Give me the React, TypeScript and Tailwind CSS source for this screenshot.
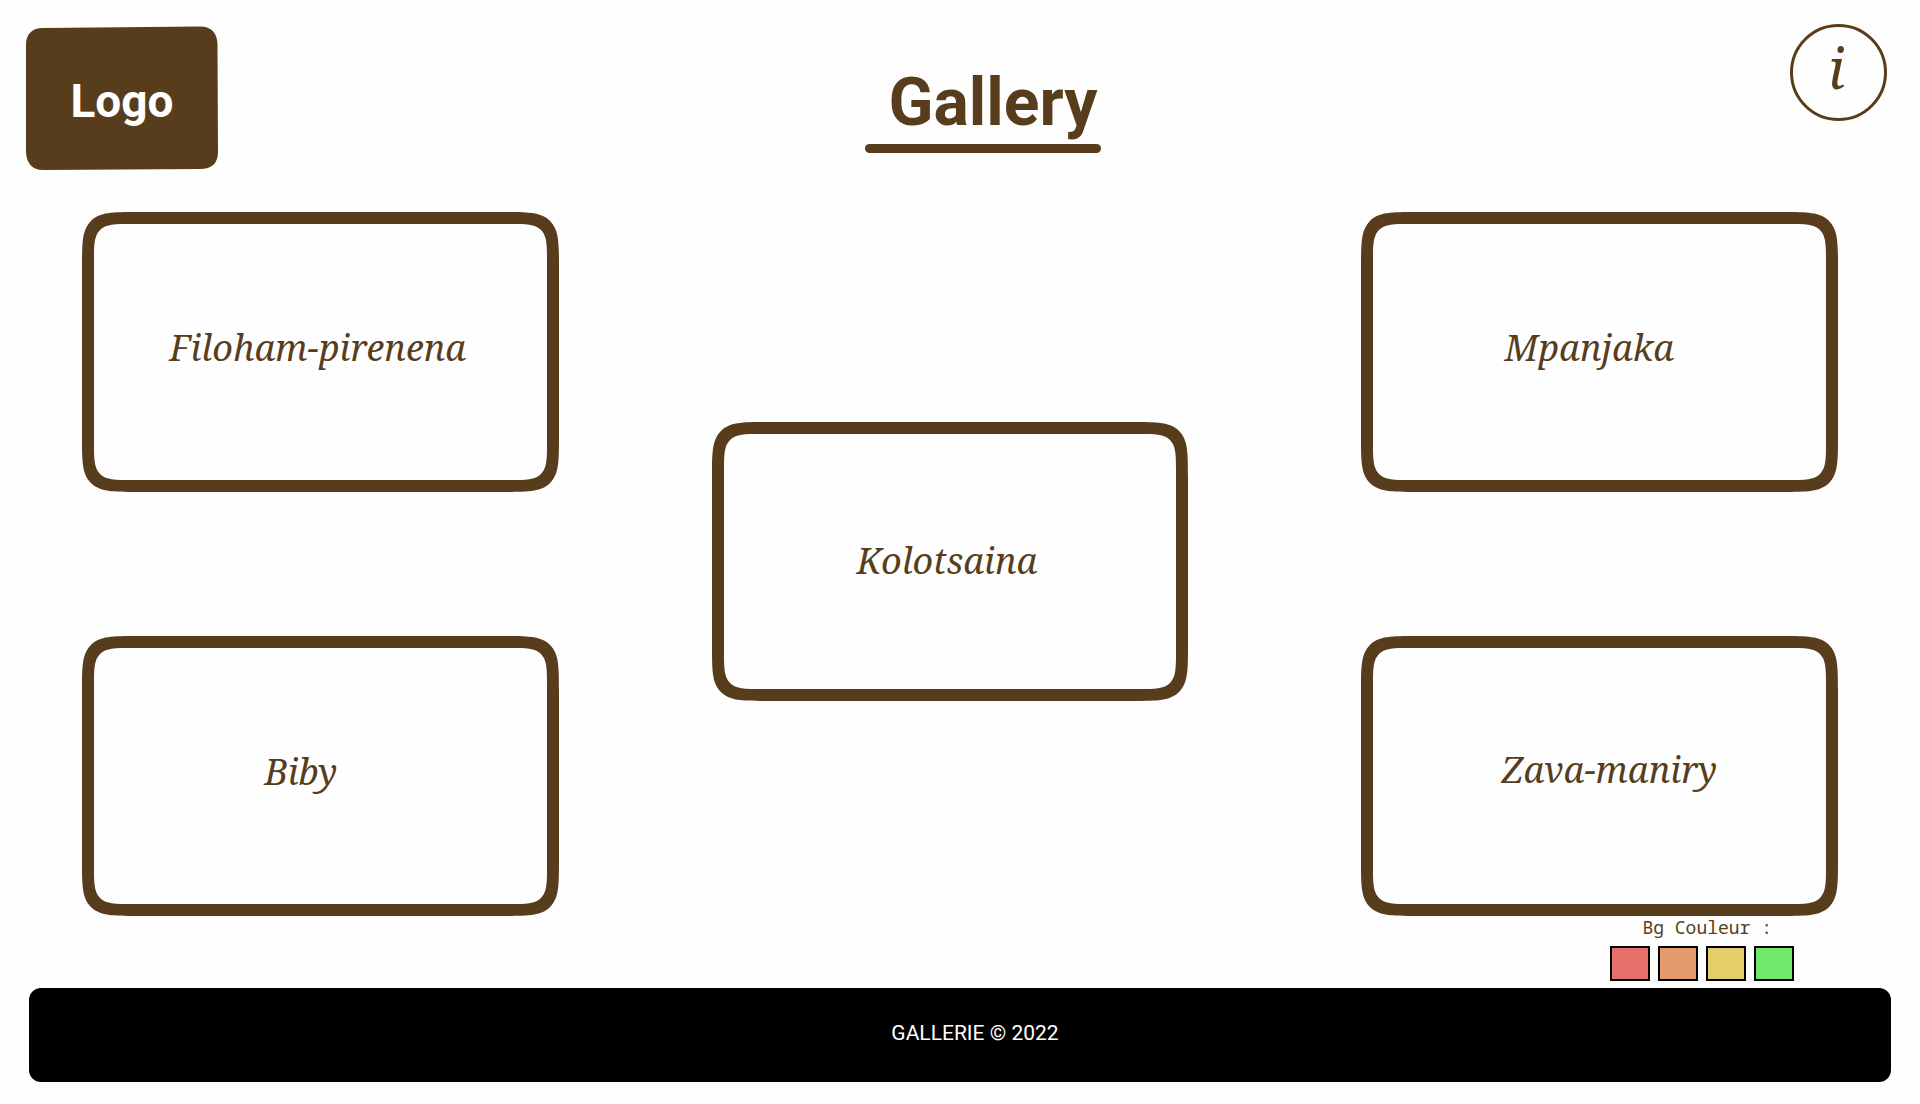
import { useState } from "react";

const swatches = [
  { name: "Rouge", value: "#e66f6b", className: "bg-[#e66f6b]" },
  { name: "Orange", value: "#e49a6a", className: "bg-[#e49a6a]" },
  { name: "Jaune", value: "#e4ce6a", className: "bg-[#e4ce6a]" },
  { name: "Vert", value: "#70e86b", className: "bg-[#70e86b]" },
];

function Card({ label, className }: { label: string; className: string }) {
  return (
    <a
      href="#"
      className="flex aspect-[477/280] w-full rounded-[56px] bg-[#583d1d] p-3 text-[36px] leading-none italic [corner-shape:squircle]"
    >
      <span
        className={`flex flex-1 items-center justify-center rounded-[38px] bg-[#fefefe] [corner-shape:squircle] ${className}`}
      >
        {label}
      </span>
    </a>
  );
}

export default function App() {
  const [background, setBackground] = useState("#fefefe");

  return (
    <div
      className="flex min-h-screen flex-col text-[#583d1d] [font-family:'Noto_Serif','Droid_Serif','DejaVu_Serif',serif]"
      style={{ backgroundColor: background }}
    >
      <header className="flex items-start pt-6 pr-[33px] pl-[26px] [font-family:Roboto,sans-serif]">
        <a
          href="#"
          className="relative mt-[2px] flex h-36 w-48 items-center justify-center pt-[6px] text-[46px] leading-none font-bold text-white"
        >
          <svg
            className="absolute inset-0 h-full w-full"
            viewBox="0 0 192 144"
            preserveAspectRatio="none"
            aria-hidden="true"
          >
            <path
              d="M17 2 L174 0.5 C186 0.5 191 7 191.5 18 L192 126 C192 137 186 143 174 143 L17 144 C6 144 0.5 137 0 126 L0 19 C0 8 6 2 17 2 Z"
              fill="#583d1d"
            />
          </svg>
          <span className="relative">Logo</span>
        </a>
        <div className="flex flex-1 flex-col items-center pt-[38px] pr-[42px]">
          <h1 className="pl-5 text-[66px] leading-[82px] font-bold">Gallery</h1>
          <div className="h-[9px] w-[236px] rounded-full bg-[#583d1d]" />
        </div>
        <button
          type="button"
          aria-label="Informations"
          className="flex size-[97px] items-center justify-center rounded-full border-3 border-[#583d1d] pr-1 pb-3 text-[56px] leading-none italic [font-family:'Noto_Serif','Droid_Serif','DejaVu_Serif',serif]"
        >
          i
        </button>
      </header>

      <main className="flex flex-1 flex-col">
        <nav className="grid grid-cols-[53fr_17fr_53fr_19fr_53fr] items-center px-[82px] pt-[42px]">
          <div className="col-start-1 flex flex-col gap-36">
            <Card label="Filoham-pirenena" className="pr-[6px] pb-2" />
            <Card label="Biby" className="pr-10 pb-2" />
          </div>
          <div className="col-start-3 pr-[2px] pb-[6px]">
            <Card label="Kolotsaina" className="pr-[6px]" />
          </div>
          <div className="col-start-5 flex flex-col gap-36">
            <Card label="Mpanjaka" className="pr-5 pb-2" />
            <Card label="Zava-maniry" className="pb-3 pl-5" />
          </div>
        </nav>
        <div className="flex flex-col items-end pr-[126px] pb-[6px]">
          <p className="mb-2 pr-[22px] text-[18px] leading-[22px] [font-family:'Noto_Sans_Mono','DejaVu_Sans_Mono',monospace]">
            Bg Couleur :
          </p>
          <div className="flex gap-2">
            {swatches.map((swatch) => (
              <button
                key={swatch.name}
                type="button"
                aria-label={swatch.name}
                onClick={() => setBackground(swatch.value)}
                className={`h-[35px] w-10 border-2 border-black ${swatch.className}`}
              />
            ))}
          </div>
        </div>
      </main>

      <footer className="mx-[29px] mb-[22px] flex h-[94px] items-center justify-center rounded-xl bg-black pb-[2px] pl-[30px] text-[21px] text-white [font-family:Roboto,sans-serif]">
        GALLERIE © 2022
      </footer>
    </div>
  );
}
